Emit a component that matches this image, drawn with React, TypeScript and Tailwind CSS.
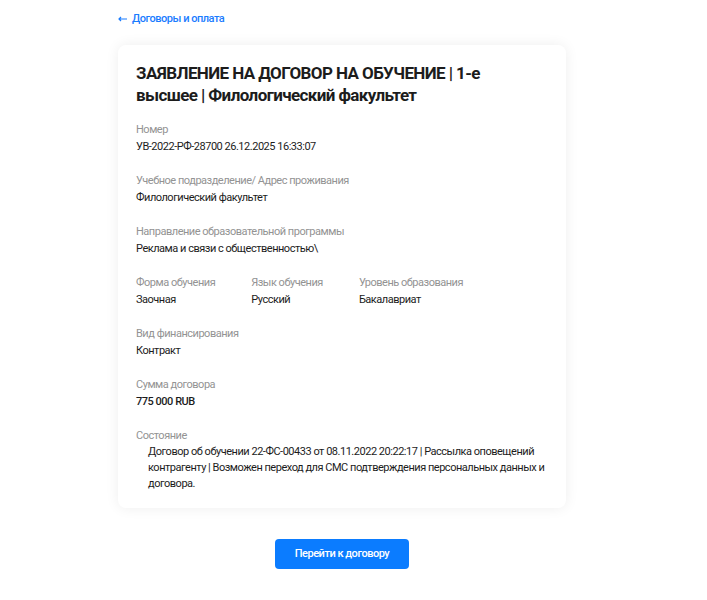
const FIELDS = [
  { label: "Номер", value: "УВ-2022-РФ-28700 26.12.2025 16:33:07" },
  { label: "Учебное подразделение/ Адрес проживания", value: "Филологический факультет" },
  { label: "Направление образовательной программы", value: "Реклама и связи с общественностью\\" },
];

const ROW = [
  { label: "Форма обучения", value: "Заочная" },
  { label: "Язык обучения", value: "Русский" },
  { label: "Уровень образования", value: "Бакалавриат" },
];

function Field({ label, value, bold }: { label: string; value: string; bold?: boolean }) {
  return (
    <div>
      <div className="text-[11px] leading-[17px] text-[#939393]">{label}</div>
      <div className={`text-[11px] leading-[17px] text-[#1c1c1c] ${bold ? "font-medium" : ""}`}>{value}</div>
    </div>
  );
}

export default function App() {
  return (
    <div className="min-h-screen bg-white font-['Roboto',sans-serif] tracking-[-0.03em]">
      <div className="ml-[118px] w-[448px] pt-[12px]">
        {/* Back link */}
        <a href="#" className="flex h-[14px] items-center gap-[5px] text-[11px] font-medium text-[#1a7cff]">
          <svg width="9" height="6" viewBox="0 0 9 6" fill="none" stroke="currentColor" strokeWidth="1.2">
            <path d="M9 3H1M3 1L1 3l2 2" />
          </svg>
          <span>Договоры и оплата</span>
        </a>

        {/* Card */}
        <div className="mt-[19px] rounded-[8px] bg-white px-[18px] pb-[16px] pt-[17px] shadow-[0_0_14px_rgba(0,0,0,0.07)]">
          <h1 className="pr-[20px] text-[17px] font-bold leading-[22px] tracking-[-0.035em] text-[#1c1c1c]">
            ЗАЯВЛЕНИЕ НА ДОГОВОР НА ОБУЧЕНИЕ | 1-е высшее | Филологический факультет
          </h1>

          <div className="mt-[15px] flex flex-col gap-[17px]">
            {FIELDS.map((f) => (
              <Field key={f.label} label={f.label} value={f.value} />
            ))}
            <div className="flex gap-[36px]">
              {ROW.map((f) => (
                <Field key={f.label} label={f.label} value={f.value} />
              ))}
            </div>
            <Field label="Вид финансирования" value="Контракт" />
            <Field label="Сумма договора" value="775 000 RUB" bold />
            <div>
              <div className="text-[11px] leading-[17px] text-[#939393]">Состояние</div>
              <div className="pl-[12px] text-[11px] leading-[16px] text-[#1c1c1c]">
                Договор об обучении 22-ФС-00433 от 08.11.2022 20:22:17 | Рассылка оповещений контрагенту | Возможен
                переход для СМС подтверждения персональных данных и договора.
              </div>
            </div>
          </div>
        </div>

        {/* Button */}
        <div className="mt-[31px] flex justify-center">
          <button className="h-[30px] w-[134px] rounded-[4px] bg-[#0b7cff] text-[11px] font-medium text-white">
            Перейти к договору
          </button>
        </div>
      </div>
    </div>
  );
}
